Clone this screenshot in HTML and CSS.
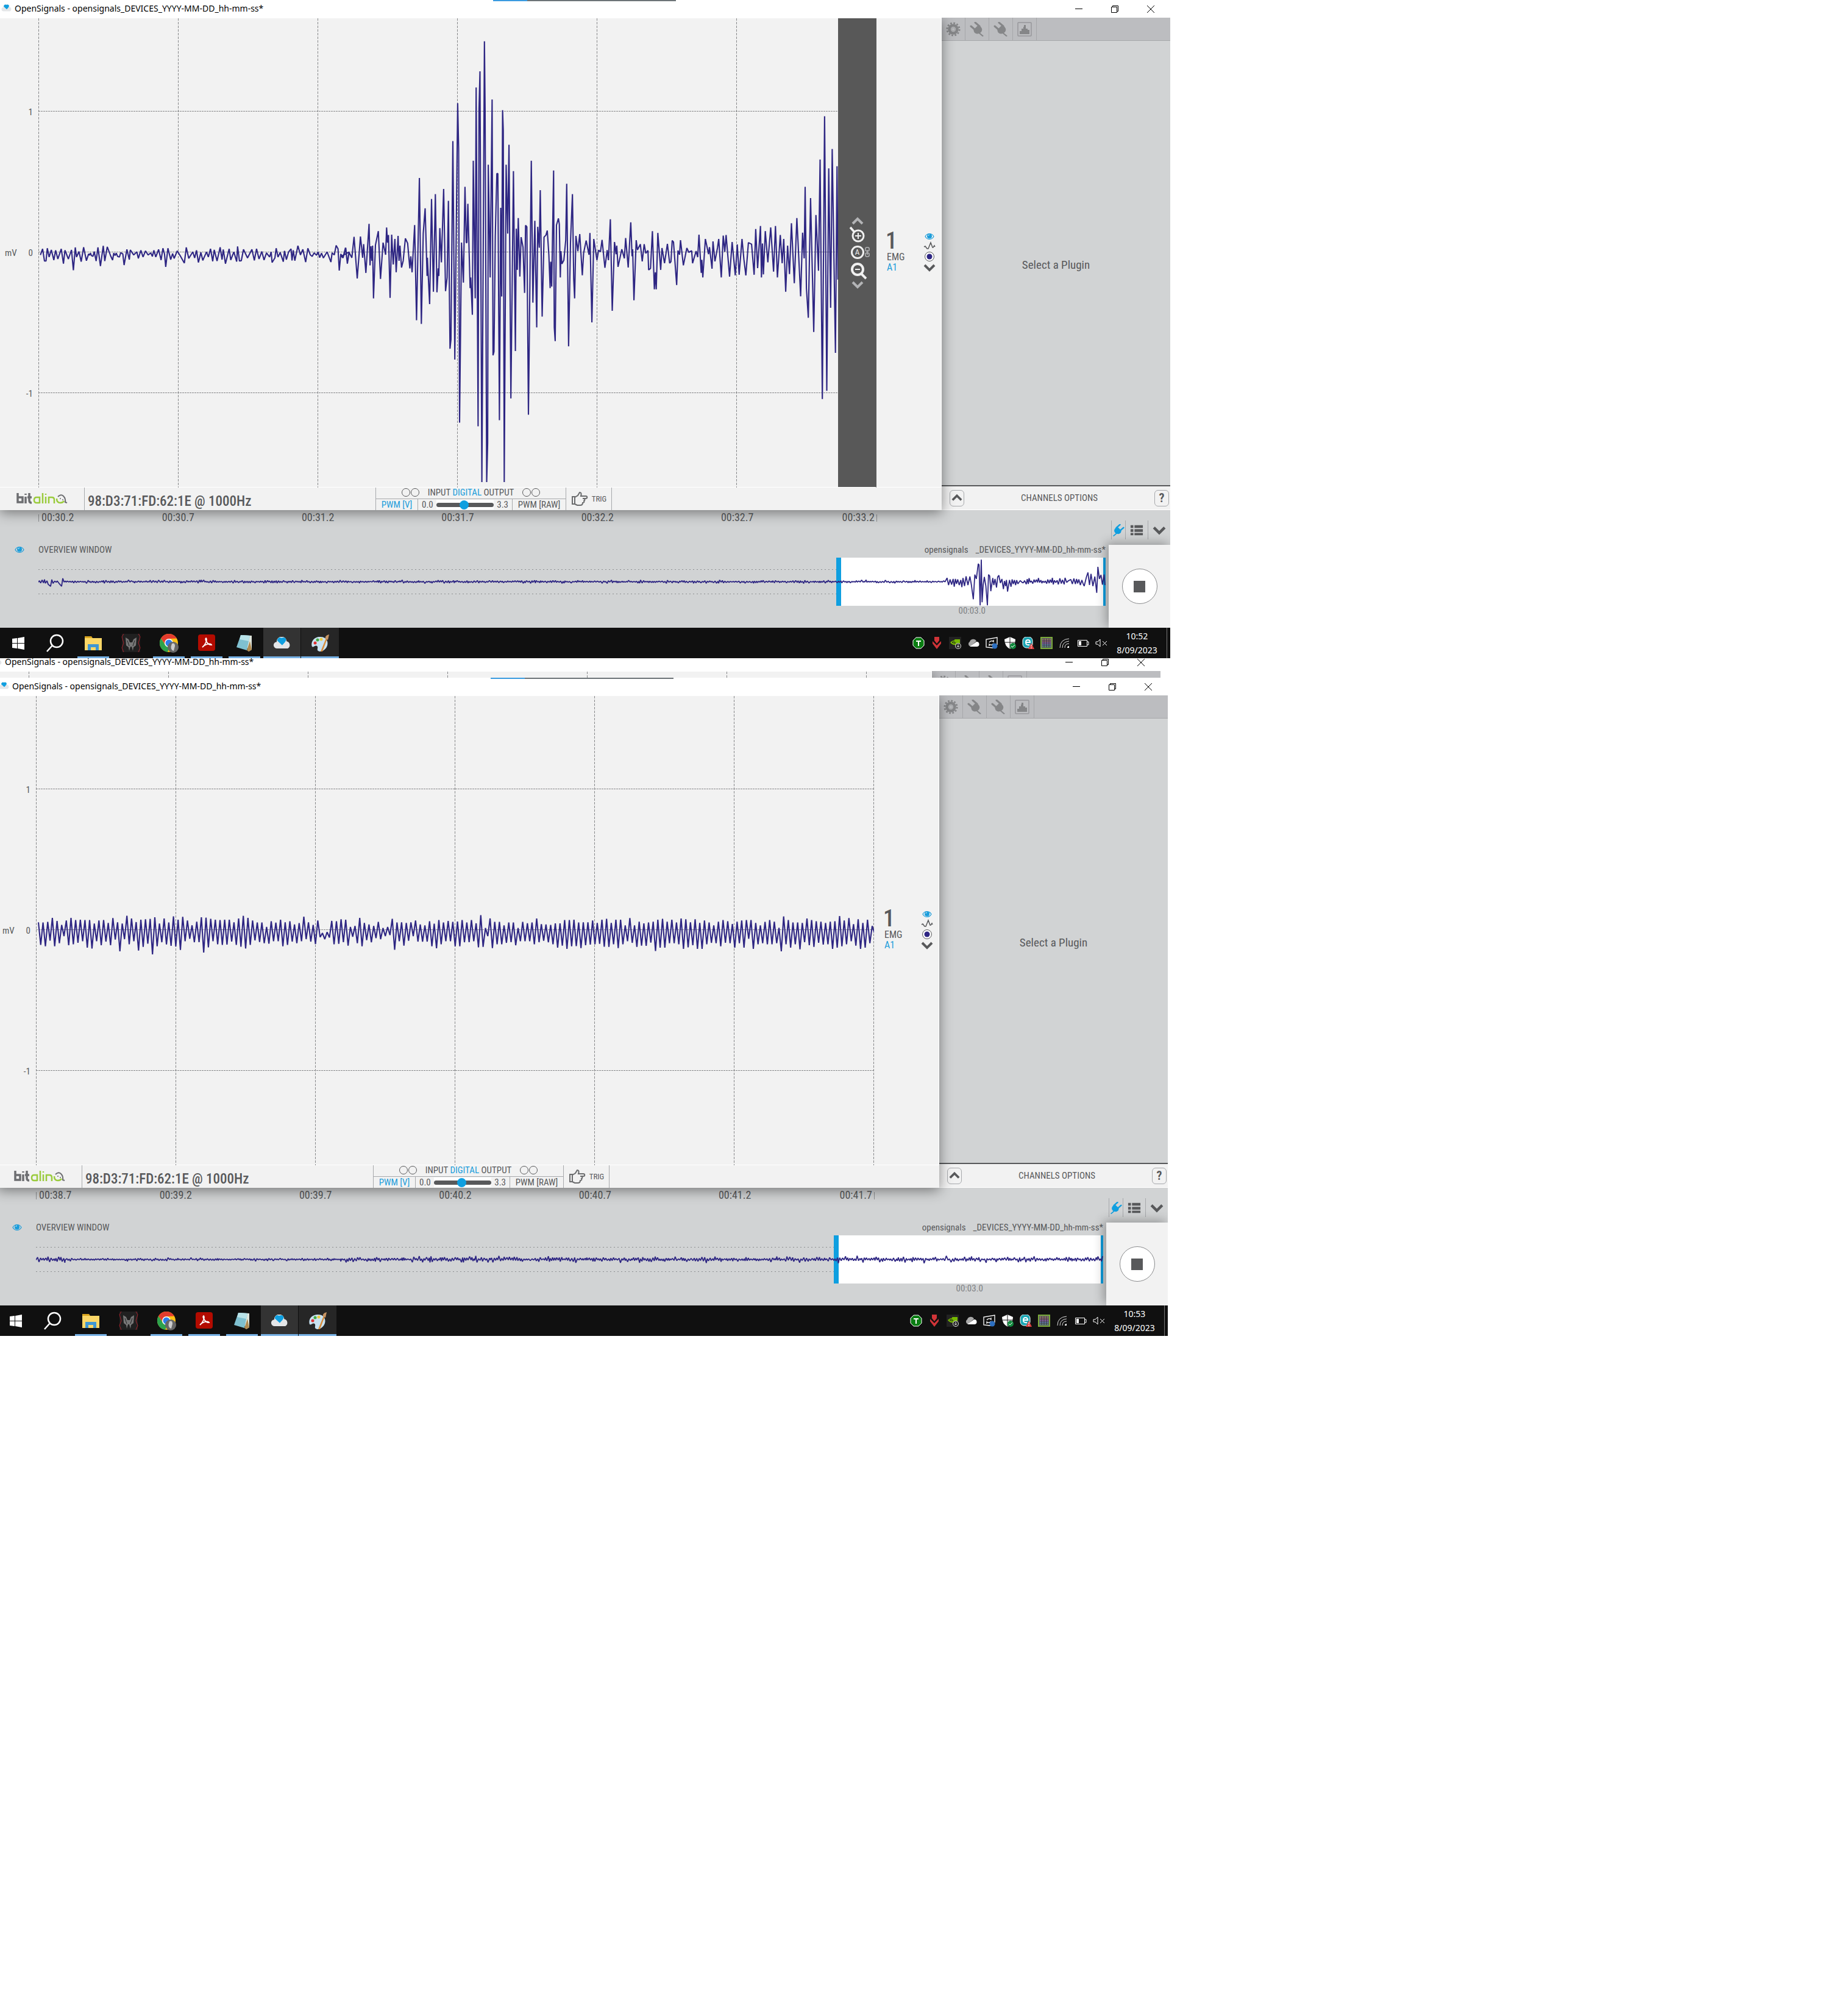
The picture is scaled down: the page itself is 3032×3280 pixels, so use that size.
FILE: index.html
```html
<!DOCTYPE html>
<html lang="en">
<head>
<meta charset="utf-8">
<title>OpenSignals</title>
<link rel="stylesheet" href="styles.css">
</head>
<body>
<svg class="defs" aria-hidden="true">
  <symbol id="i-app" viewBox="0 0 32 22"><path d="M7 21a6 6 0 0 1-1-12 9 9 0 0 1 18-1 7 7 0 0 1 2 13z" fill="#e4e6e8"/><path d="M16 15 7 7c0-4 3-6 5-6l3 1c3-2 8-1 8 3 0 3-3 6-7 10z" fill="#0f9fe0"/></symbol>
  <symbol id="i-min" viewBox="0 0 14 14"><path d="M1 6.5h12" stroke="#000" fill="none"/></symbol>
  <symbol id="i-restore" viewBox="0 0 14 14"><path d="M1.500 3.500h9v9h-9zM3.500 3.500v-2h9v9h-2" stroke="#000" fill="none"/></symbol>
  <symbol id="i-close" viewBox="0 0 14 14"><path d="m1 1 12 12M13 1 1 13" stroke="#000" fill="none"/></symbol>
  <symbol id="i-gear" viewBox="0 0 26 26"><circle cx="13" cy="13" r="11" fill="none" stroke="#858688" stroke-width="3" stroke-dasharray="3 2.760"/><circle cx="13" cy="13" r="7" fill="none" stroke="#858688" stroke-width="5"/><circle cx="13" cy="13" r="3" fill="none" stroke="#a9aaac" stroke-width="2"/></symbol>
  <symbol id="i-plug" viewBox="0 0 24 24"><path d="M8 11 14 5c2 1 5 3 6 6s-1 6-3 7l6 5-2 1-6-5c-3 1-7 0-8-3s-1-4 1-5z"/><path d="m2 7 7 6M9 1l7 6" stroke="currentColor" stroke-width="3" stroke-linecap="round"/></symbol>
  <symbol id="i-chart" viewBox="0 0 24 24"><rect x="1" y="1" width="22" height="22" rx="1" fill="none" stroke="#96979a" stroke-width="1.500"/><path d="M4 20v-5h3v-4h3V8h1V5h3v6h3v2h3v7z" fill="#858688"/></symbol>
  <symbol id="i-eye" viewBox="0 0 16 12"><path d="M1 6c3-6 11-6 14 0-3 6-11 6-14 0z" fill="none" stroke="#1b9ddb" stroke-width="1.200"/><circle cx="8" cy="5.500" r="4" fill="#1b9ddb"/><path d="M6 5c0-1 1-2 2-2" stroke="#fff" fill="none"/></symbol>
  <symbol id="i-wave" viewBox="0 0 20 14"><path d="m1 9 2-1 3 4h2l4-10 3 8h1l2-3 1 2" fill="none" stroke="#58595b" stroke-width="1.500"/></symbol>
  <symbol id="i-dot" viewBox="0 0 18 18"><circle cx="9" cy="9" r="7.500" fill="#fff" stroke="#58595b"/><circle cx="9" cy="9" r="4.500" fill="#2e2683"/></symbol>
  <symbol id="i-down" viewBox="0 0 20 14"><path d="m2 3 8 8 8-8" fill="none" stroke="currentColor" stroke-width="4"/></symbol>
  <symbol id="i-up" viewBox="0 0 20 14"><path d="m2 11 8-8 8 8" fill="none" stroke="currentColor" stroke-width="4"/></symbol>
  <symbol id="i-zoomin" viewBox="0 0 30 30"><g fill="none" stroke="#f0f0f0"><circle cx="16" cy="17" r="9" stroke-width="3"/><path d="m3 3 7 8" stroke-width="3.500"/><path d="M11 17h10M16 12v10" stroke-width="2"/></g></symbol>
  <symbol id="i-zoomout" viewBox="0 0 30 30"><g fill="none" stroke="#f0f0f0"><circle cx="15" cy="12" r="9" stroke-width="4"/><path d="m20 18 9 9" stroke-width="4"/><path d="M11 12h8" stroke-width="2"/></g></symbol>
  <symbol id="i-link" viewBox="0 0 10 18"><g fill="none" stroke="#b3b4b6" stroke-width="1.500"><rect x="2" y="1" width="6" height="6" rx="2"/><rect x="2" y="10" width="6" height="6" rx="2"/><path d="M5 5v8"/></g></symbol>
  <symbol id="i-hand" viewBox="0 0 28 24"><path d="M2 8h4v12H2zM6 9l5-3 3-5c3 0 3 3 2 6h8c3 0 3 4 0 4h-5 2c2 1 2 3 0 4 1 2 0 3-2 3 0 3-1 4-4 4H10l-4-2" fill="none" stroke="#6b6c6e" stroke-width="2"/></symbol>
  <symbol id="i-logo" viewBox="0 0 84 20"><g fill="none" stroke-width="3.500"><path d="M2 1v15h8V8H2M15 7v11M15 2v2M21 1v12q0 4 4 4M18 8h7" stroke="#6d6e71"/><path d="M38 17h-5q-4 0-4-4.500T33 8h5v10M43 1v17M48 7v11M48 2v2M53 18V8h5q4 0 4 4v6M66 10q0 7 6 7 4 0 6-3" stroke="#9acb3c" stroke-width="2.500"/><path d="M68 7q5-5 9-1t3 10l3 1" stroke="#6d6e71" stroke-width="2"/></g><circle cx="72" cy="10" r="1" fill="#6d6e71"/><circle cx="76" cy="12" r="1" fill="#6d6e71"/></symbol>
  <symbol id="i-list" viewBox="0 0 24 20"><path d="M1 1h5v5H1zM8 1h15v5H8zM1 8h5v5H1zM8 8h15v5H8zM1 15h5v4H1zM8 15h15v4H8z" fill="#58595b"/></symbol>
  <symbol id="t-win" viewBox="0 0 32 32"><path d="m6 9 8-1v8H6zM15 8l11-2v10H15zM6 17h8v8l-8-1zM15 17h11v10l-11-2z" fill="#fff"/></symbol>
  <symbol id="t-search" viewBox="0 0 32 32"><circle cx="19" cy="13" r="10" fill="none" stroke="#fff" stroke-width="2.500"/><path d="m12 20-9 10" stroke="#fff" stroke-width="2.500"/></symbol>
  <symbol id="t-folder" viewBox="0 0 32 32"><path d="M2 5h11l2 3H2z" fill="#d9a520"/><path d="M2 8h28v20H2z" fill="#fbd767"/><path d="M7 28V18h18v10h-5v-5h-8v5z" fill="#3f97d3"/></symbol>
  <symbol id="t-pred" viewBox="0 0 32 32"><path d="M1 1h30v30H1z" fill="#202020"/><path d="m4 1-3 5 3 10-3 8 3 7M28 1l3 5-3 10 3 8-3 7" fill="none" stroke="#a3222b"/><path d="m7 7 5 3 2 5h4l2-5 5-3-1 13-4 3-1 6-2-7h-2l-2 7-1-6-4-3z" fill="#777"/><path d="m10 12 3 9M22 12l-3 9" stroke="#222"/></symbol>
  <symbol id="t-chrome" viewBox="0 0 32 32"><circle cx="16" cy="16" r="15" fill="#fbc116"/><path d="M3 8.500A15 15 0 0 1 29 8.500L16 9l-6 9z" fill="#e33b2e"/><path d="M3 8.500 10 19l7 4-3 8A15 15 0 0 1 3 8.500z" fill="#2da24c"/><circle cx="16" cy="16" r="7" fill="#fff"/><circle cx="16" cy="16" r="5.500" fill="#2f7de9"/><circle cx="23" cy="23" r="9" fill="#666"/><path d="M21 17q5-2 5 4l-2 8q-7-2-3-12z" fill="#ccc"/></symbol>
  <symbol id="t-pdf" viewBox="0 0 32 32"><rect x="2" y="2" width="28" height="27" rx="4" fill="#b30b00"/><path d="M9 23c4-3 9-12 6-15-3 1 3 12 9 11-2-4-12 0-15 4z" fill="none" stroke="#fff" stroke-width="1.800"/></symbol>
  <symbol id="t-note" viewBox="0 0 32 32"><path d="m10 3 18 1v23l-5 3z" fill="#dfe5dc"/><path d="m10 3 15 1-5 24-17-5z" fill="#7fc0d0"/><path d="m10 3 15 1-2 9-15-3z" fill="#b8e2e8"/><path d="m20 28 3 2 5-3-3-14z" fill="#b08a50"/></symbol>
  <symbol id="t-paint" viewBox="0 0 32 32"><path d="M3 22C0 13 8 5 17 6c9 0 13 7 11 14s-10 12-15 9c-3-2 1-6-2-8s-6 3-8 1z" fill="#c9e3f2"/><circle cx="8" cy="16" r="2.500" fill="#d33"/><circle cx="12" cy="11" r="2.500" fill="#4a4"/><circle cx="18" cy="10" r="2.500" fill="#ec4"/><path d="m17 30 9-22 2 1-8 21z" fill="#d98d3c"/><path d="M25 9c-1-4 2-6 6-7l-2 9z" fill="#c79463"/></symbol>
  <symbol id="y-t" viewBox="0 0 20 20"><path d="M6 1h8l5 5v8l-5 5H6l-5-5V6z" fill="#0a7d12" stroke="#fff"/><path d="M6 6h8v2h-3v7H9V8H6z" fill="#fff"/></symbol>
  <symbol id="y-v" viewBox="0 0 20 20"><path d="M6 0h8v6l-4 5-4-5zM3 7l7 7 7-7v4l-7 9-7-9z" fill="#d13438"/></symbol>
  <symbol id="y-nv" viewBox="0 0 20 20"><path d="M0 0h20v20H0z" fill="#222"/><path d="M2 9q5-5 10-3v7q-7 1-10-4zM9 4h9v11h-6z" fill="#76b900"/><path d="M5 9q3-3 5 0t-5 0" fill="none" stroke="#222"/><circle cx="15" cy="15" r="4.500" fill="#222" stroke="#ddd"/><path d="M15 12v5m-2-2 2 2 2-2" stroke="#ddd" fill="none"/></symbol>
  <symbol id="y-cloud" viewBox="0 0 20 20"><path d="M4 15a4 4 0 0 1 0-7 6 6 0 0 1 11-1l-9 8z" fill="#aaa"/><path d="M4 16 15 8a4 4 0 0 1 1 8z" fill="#fff"/></symbol>
  <symbol id="y-sync" viewBox="0 0 20 20"><path d="M12 18 1 17V4l18-3v12" fill="none" stroke="#fff" stroke-width="1.300"/><path d="M6 9q3-4 7-1V5M13 11q-3 4-7 1v3" fill="none" stroke="#fff" stroke-width="1.300"/><circle cx="15" cy="15" r="4.500" fill="#2d6fc0"/></symbol>
  <symbol id="y-shield" viewBox="0 0 20 20"><path d="m10 0 9 4q0 11-9 16Q1 15 1 4z" fill="#fff"/><path d="M10 0v20M1 9h18" stroke="#111"/><circle cx="15" cy="15" r="5" fill="#10893e"/><path d="m12 15 2 2 4-4" fill="none" stroke="#fff"/></symbol>
  <symbol id="y-e" viewBox="0 0 20 20"><rect x="1" y="0" width="16" height="18" rx="6" fill="#1aa6b4" stroke="#fff"/><path d="M6 9h7q0-4-3.500-4T6 9q0 5 6 4" fill="none" stroke="#fff" stroke-width="2"/><path d="m15 10 5 10H10z" fill="#e04040"/><path d="M15 13v3M15 17v2" stroke="#fff"/></symbol>
  <symbol id="y-grid" viewBox="0 0 20 20"><path d="M1 1h18v18H1z" fill="#556" stroke="#7cab3a" stroke-width="2"/><path d="M3 4h14" stroke="#d9a05c"/><path d="M3 7h14" stroke="#c66"/><path d="M3 10h14" stroke="#b6c"/><path d="M3 13h14" stroke="#69c"/><path d="M3 16h14" stroke="#6b8"/><path d="M6 3v14M10 3v14M14 3v14" stroke="#334"/></symbol>
  <symbol id="y-wifi" viewBox="0 0 20 20"><path d="M2 18Q2 4 17 3M6 18Q6 8 17 7M10 18q0-7 7-7" fill="none" stroke="#ddd"/><path d="M14 18q0-3 3-3v3z" fill="#fff"/></symbol>
  <symbol id="y-bat" viewBox="0 0 20 20"><path d="M1.500 5.500h15v10h-15zM17 8h2v5h-2" fill="none" stroke="#fff"/><path d="M3 7h4v7H3z" fill="#fff"/></symbol>
  <symbol id="y-mute" viewBox="0 0 20 20"><path d="M1 8h3l4-4v12l-4-4H1zM12 7l7 7M19 7l-7 7" fill="none" stroke="#fff"/></symbol>
</svg>

<main class="stage">

<section class="window">
  <header class="titlebar">
    <span class="strip"></span>
    <svg class="app"><use href="#i-app"/></svg><h1>OpenSignals - opensignals_DEVICES_YYYY-MM-DD_hh-mm-ss*</h1>
    <div class="winctl"><button aria-label="Minimize"><svg><use href="#i-min"/></svg></button><button aria-label="Restore"><svg><use href="#i-restore"/></svg></button><button aria-label="Close"><svg><use href="#i-close"/></svg></button></div>
  </header>
  <div class="upper">
    <div class="signal">
      <div class="plot">
        <div class="yaxis"><b>1</b><b><i>mV</i>0</b><b>-1</b></div>
        <div class="graph">
          <svg class="trace" data-wave="burst" viewBox="0 0 1375 770" preserveAspectRatio="none"></svg>
          <div class="zoombar">
            <button aria-label="Pan up"><svg class="chev"><use href="#i-up"/></svg></button>
            <button aria-label="Zoom in"><svg class="lens"><use href="#i-zoomin"/></svg></button>
            <button class="auto" aria-label="Auto scale">A</button>
            <button class="chain" aria-label="Link axes"><svg><use href="#i-link"/></svg></button>
            <button aria-label="Zoom out"><svg class="lens"><use href="#i-zoomout"/></svg></button>
            <button aria-label="Pan down"><svg class="chev"><use href="#i-down"/></svg></button>
          </div>
        </div>
        <div class="channel">
          <div class="chname"><strong>1</strong><span>EMG</span><a href="#a1">A1</a></div>
          <div class="chtools"><button aria-label="Show channel"><svg class="eye"><use href="#i-eye"/></svg></button><button aria-label="Filter"><svg class="wv"><use href="#i-wave"/></svg></button><button aria-label="Colour"><svg class="dot"><use href="#i-dot"/></svg></button><button aria-label="More"><svg class="dn"><use href="#i-down"/></svg></button></div>
        </div>
      </div>
      <div class="status">
        <div class="brand"><svg role="img" aria-label="bitalino"><use href="#i-logo"/></svg></div>
        <div class="device">98:D3:71:FD:62:1E @ 1000Hz</div>
        <div class="io">
          <div class="digital"><span class="leds"><i></i><i></i></span><span>INPUT <em>DIGITAL</em> OUTPUT</span><span class="leds"><i></i><i></i></span></div>
          <div class="pwm"><button class="on">PWM [V]</button><label class="range"><span>0.0</span><input type="range" min="0" max="3.3" step="0.01" value="1.6" aria-label="PWM voltage"><span>3.3</span></label><button>PWM [RAW]</button></div>
        </div>
        <button class="trig"><svg><use href="#i-hand"/></svg>TRIG</button>
      </div>
    </div>
    <aside class="plugins">
      <nav class="tools"><button aria-label="Settings"><svg><use href="#i-gear"/></svg></button><button aria-label="Plugin one"><svg><use href="#i-plug"/></svg></button><button aria-label="Plugin two"><svg><use href="#i-plug"/></svg></button><button aria-label="Statistics"><svg><use href="#i-chart"/></svg></button></nav>
      <p class="pick">Select a Plugin</p>
      <div class="options"><button aria-label="Expand"><svg><use href="#i-up"/></svg></button><span>CHANNELS OPTIONS</span><button>?</button></div>
    </aside>
  </div>
  <div class="lower">
    <div class="timeline">
      <ol class="times"><li>00:30.2</li><li>00:30.7</li><li>00:31.2</li><li>00:31.7</li><li>00:32.2</li><li>00:32.7</li><li>00:33.2</li></ol>
      <div class="ovhead"><svg class="eye"><use href="#i-eye"/></svg><h2>OVERVIEW WINDOW</h2><p><span>opensignals</span><span>_DEVICES_YYYY-MM-DD_hh-mm-ss*</span></p></div>
      <div class="overview"><span class="brush"></span><svg data-wave="overview-burst" viewBox="0 0 1751 79" preserveAspectRatio="none"></svg></div>
      <div class="span">00:03.0</div>
    </div>
    <div class="side">
      <div class="sidetools"><button aria-label="Devices" class="blue"><svg><use href="#i-plug"/></svg></button><button aria-label="List"><svg><use href="#i-list"/></svg></button><button aria-label="Collapse"><svg><use href="#i-down"/></svg></button></div>
      <div class="player"><button aria-label="Stop recording"></button></div>
    </div>
  </div>
  <footer class="taskbar">
    <button class="start" aria-label="Start"><svg><use href="#t-win"/></svg></button><button aria-label="Search"><svg><use href="#t-search"/></svg></button><button class="run" aria-label="File Explorer"><svg><use href="#t-folder"/></svg></button><button aria-label="PredatorSense"><svg><use href="#t-pred"/></svg></button><button class="run" aria-label="Chrome"><svg><use href="#t-chrome"/></svg></button><button class="run" aria-label="Acrobat"><svg><use href="#t-pdf"/></svg></button><button class="run" aria-label="Notepad"><svg><use href="#t-note"/></svg></button><button class="active" aria-label="OpenSignals"><svg class="small"><use href="#i-app"/></svg></button><button class="open" aria-label="Paint"><svg><use href="#t-paint"/></svg></button>
    <div class="tray"><svg><use href="#y-t"/></svg><svg><use href="#y-v"/></svg><svg><use href="#y-nv"/></svg><svg><use href="#y-cloud"/></svg><svg><use href="#y-sync"/></svg><svg><use href="#y-shield"/></svg><svg><use href="#y-e"/></svg><svg><use href="#y-grid"/></svg><svg><use href="#y-wifi"/></svg><svg><use href="#y-bat"/></svg><svg><use href="#y-mute"/></svg></div>
    <div class="clock"><span>10:52</span><span>8/09/2023</span></div>
  </footer>
</section>

<section class="window peek">
 <div class="peekin">
  <header class="titlebar">
    <svg class="app"><use href="#i-app"/></svg><h1>OpenSignals - opensignals_DEVICES_YYYY-MM-DD_hh-mm-ss*</h1>
    <div class="winctl"><button aria-label="Minimize"><svg><use href="#i-min"/></svg></button><button aria-label="Restore"><svg><use href="#i-restore"/></svg></button><button aria-label="Close"><svg><use href="#i-close"/></svg></button></div>
  </header>
  <div class="upper">
    <div class="signal"><div class="plot"><div class="yaxis"></div><div class="graph"><svg class="trace" data-wave="none" viewBox="0 0 1375 770" preserveAspectRatio="none"></svg></div><div class="channel"></div></div></div>
    <aside class="plugins">
      <nav class="tools"><button aria-label="Settings"><svg><use href="#i-gear"/></svg></button><button aria-label="Plugin one"><svg><use href="#i-plug"/></svg></button><button aria-label="Plugin two"><svg><use href="#i-plug"/></svg></button><button aria-label="Statistics"><svg><use href="#i-chart"/></svg></button></nav>
    </aside>
  </div>
 </div>
</section>

<section class="window second">
 <div class="secondin">
  <header class="titlebar">
    <span class="strip"></span>
    <svg class="app"><use href="#i-app"/></svg><h1>OpenSignals - opensignals_DEVICES_YYYY-MM-DD_hh-mm-ss*</h1>
    <div class="winctl"><button aria-label="Minimize"><svg><use href="#i-min"/></svg></button><button aria-label="Restore"><svg><use href="#i-restore"/></svg></button><button aria-label="Close"><svg><use href="#i-close"/></svg></button></div>
  </header>
  <div class="upper">
    <div class="signal">
      <div class="plot">
        <div class="yaxis"><b>1</b><b><i>mV</i>0</b><b>-1</b></div>
        <div class="graph"><svg class="trace" data-wave="steady" viewBox="0 0 1375 770" preserveAspectRatio="none"></svg></div>
        <div class="channel">
          <div class="chname"><strong>1</strong><span>EMG</span><a href="#a1">A1</a></div>
          <div class="chtools"><button aria-label="Show channel"><svg class="eye"><use href="#i-eye"/></svg></button><button aria-label="Filter"><svg class="wv"><use href="#i-wave"/></svg></button><button aria-label="Colour"><svg class="dot"><use href="#i-dot"/></svg></button><button aria-label="More"><svg class="dn"><use href="#i-down"/></svg></button></div>
        </div>
      </div>
      <div class="status">
        <div class="brand"><svg role="img" aria-label="bitalino"><use href="#i-logo"/></svg></div>
        <div class="device">98:D3:71:FD:62:1E @ 1000Hz</div>
        <div class="io">
          <div class="digital"><span class="leds"><i></i><i></i></span><span>INPUT <em>DIGITAL</em> OUTPUT</span><span class="leds"><i></i><i></i></span></div>
          <div class="pwm"><button class="on">PWM [V]</button><label class="range"><span>0.0</span><input type="range" min="0" max="3.3" step="0.01" value="1.6" aria-label="PWM voltage"><span>3.3</span></label><button>PWM [RAW]</button></div>
        </div>
        <button class="trig"><svg><use href="#i-hand"/></svg>TRIG</button>
      </div>
    </div>
    <aside class="plugins">
      <nav class="tools"><button aria-label="Settings"><svg><use href="#i-gear"/></svg></button><button aria-label="Plugin one"><svg><use href="#i-plug"/></svg></button><button aria-label="Plugin two"><svg><use href="#i-plug"/></svg></button><button aria-label="Statistics"><svg><use href="#i-chart"/></svg></button></nav>
      <p class="pick">Select a Plugin</p>
      <div class="options"><button aria-label="Expand"><svg><use href="#i-up"/></svg></button><span>CHANNELS OPTIONS</span><button>?</button></div>
    </aside>
  </div>
  <div class="lower">
    <div class="timeline">
      <ol class="times"><li>00:38.7</li><li>00:39.2</li><li>00:39.7</li><li>00:40.2</li><li>00:40.7</li><li>00:41.2</li><li>00:41.7</li></ol>
      <div class="ovhead"><svg class="eye"><use href="#i-eye"/></svg><h2>OVERVIEW WINDOW</h2><p><span>opensignals</span><span>_DEVICES_YYYY-MM-DD_hh-mm-ss*</span></p></div>
      <div class="overview"><span class="brush"></span><svg data-wave="overview-steady" viewBox="0 0 1751 79" preserveAspectRatio="none"></svg></div>
      <div class="span">00:03.0</div>
    </div>
    <div class="side">
      <div class="sidetools"><button aria-label="Devices" class="blue"><svg><use href="#i-plug"/></svg></button><button aria-label="List"><svg><use href="#i-list"/></svg></button><button aria-label="Collapse"><svg><use href="#i-down"/></svg></button></div>
      <div class="player"><button aria-label="Stop recording"></button></div>
    </div>
  </div>
  <footer class="taskbar">
    <button class="start" aria-label="Start"><svg><use href="#t-win"/></svg></button><button aria-label="Search"><svg><use href="#t-search"/></svg></button><button class="run" aria-label="File Explorer"><svg><use href="#t-folder"/></svg></button><button aria-label="PredatorSense"><svg><use href="#t-pred"/></svg></button><button class="run" aria-label="Chrome"><svg><use href="#t-chrome"/></svg></button><button class="run" aria-label="Acrobat"><svg><use href="#t-pdf"/></svg></button><button class="run" aria-label="Notepad"><svg><use href="#t-note"/></svg></button><button class="active" aria-label="OpenSignals"><svg class="small"><use href="#i-app"/></svg></button><button class="open" aria-label="Paint"><svg><use href="#t-paint"/></svg></button>
    <div class="tray"><svg><use href="#y-t"/></svg><svg><use href="#y-v"/></svg><svg><use href="#y-nv"/></svg><svg><use href="#y-cloud"/></svg><svg><use href="#y-sync"/></svg><svg><use href="#y-shield"/></svg><svg><use href="#y-e"/></svg><svg><use href="#y-grid"/></svg><svg><use href="#y-wifi"/></svg><svg><use href="#y-bat"/></svg><svg><use href="#y-mute"/></svg></div>
    <div class="clock"><span>10:53</span><span>8/09/2023</span></div>
  </footer>
 </div>
</section>

</main>
<script src="waves.js"></script>
</body>
</html>
```
FILE: styles.css
```css
* { box-sizing: border-box; }
body { margin: 0; background: #fff; color: #58595b; font: 16px/20px "Liberation Sans Narrow", "Roboto Condensed", "Open Sans Condensed", Roboto, sans-serif; }
.defs { position: absolute; width: 0; height: 0; }
button { margin: 0; padding: 0; border: 0; background: none; font: inherit; color: inherit; display: flex; align-items: center; justify-content: center; flex: none; }
a { color: #1b9ddb; text-decoration: none; }
svg { display: block; flex: none; fill: currentColor; }
h1, h2, p, ol { margin: 0; padding: 0; font-weight: 400; }
i, em { font-style: normal; }
.stage { max-width: 1920px; }
.peek { height: 32px; overflow: hidden; }
.peekin { margin: -8px 16px 0 -16px; }
.second { overflow: hidden; }
.secondin { margin: 0 4px 0 -4px; }

.titlebar { position: relative; z-index: 2; display: flex; align-items: center; height: 29px; background: #fff; }
.strip { position: absolute; left: 809px; top: 0; width: 300px; height: 2px; background: linear-gradient(90deg, #3a9be0 56px, #6d7478 56px); }
.app { width: 18px; height: 12px; margin: 0 4px 3px 2px; }
h1 { color: #000; font: 14px/27px "Noto Sans", sans-serif; padding-bottom: 2px; }
.winctl { display: flex; margin-left: auto; gap: 13px; padding-right: 9px; }
.winctl button { width: 46px; height: 28px; }
.winctl svg { width: 14px; height: 14px; }

.upper { display: flex; }
.signal { position: relative; z-index: 1; flex: 1; min-width: 0; background: #f2f2f2; box-shadow: 0 4px 20px rgba(0, 0, 0, .45); }
.plot { display: flex; height: 770px; background: #f2f2f2; border-top: 1px solid #fff; border-right: 1px solid #fff; }
.yaxis { width: 63px; padding-top: 38px; flex: none; }
.yaxis b { display: flex; align-items: center; justify-content: flex-end; height: 231px; padding-right: 9px; font-weight: 400; font-size: 15px; }
.yaxis i { margin-right: auto; padding-left: 8px; }
.graph { position: relative; flex: 1; min-width: 0; }
.trace { width: 100%; height: 770px; overflow: hidden; }
.zoombar { position: absolute; right: 0; top: 0; width: 63px; height: 769px; background: #585858; color: #b3b4b6; display: flex; flex-direction: column; align-items: center; justify-content: center; }
.chev { width: 20px; height: 14px; }
.lens { width: 30px; height: 30px; }
.auto { width: 22px; height: 22px; margin: 3px 0 5px; border: 3px solid #f0f0f0; border-radius: 50%; color: #f0f0f0; font-size: 13px; line-height: 16px; }
.chain { position: absolute; right: 10px; top: 375px; }
.chain svg { width: 10px; height: 18px; }
.channel { display: flex; justify-content: space-between; align-items: center; width: 106px; flex: none; padding: 0 9px 6px 17px; }
.chname { display: flex; flex-direction: column; line-height: 17px; }
.chname strong { font-size: 38px; line-height: 36px; font-weight: 500; margin-left: -2px; }
.chtools { display: flex; flex-direction: column; align-items: center; gap: 2px; padding-top: 4px; }
.eye { width: 16px; height: 12px; }
.wv { width: 20px; height: 14px; }
.dot { width: 18px; height: 18px; }
.dn { width: 20px; height: 14px; }

.status { display: flex; height: 38px; border-top: 1px solid #fff; background: #f2f2f2; }
.brand { width: 139px; padding: 8px 0 0 27px; border-right: 1px solid #a7a9ac; }
.brand svg { width: 84px; height: 20px; }
.device { width: 477px; padding: 5px 0 0 5px; font-size: 23px; line-height: 36px; font-weight: 500; }
.io { width: 313px; border: solid #a7a9ac; border-width: 0 1px; }
.digital { display: flex; align-items: center; justify-content: center; gap: 14px; height: 19px; border-bottom: 1px solid #a7a9ac; font-size: 15px; padding-bottom: 2px; }
.digital em, .on { color: #1b9ddb; }
.leds { display: flex; gap: 1px; }
.leds i { width: 14px; height: 14px; border: 1px solid #58595b; border-radius: 50%; }
.pwm { display: flex; height: 18px; font-size: 15px; }
.pwm button { width: 87px; }
.pwm .on { width: 68px; }
.range { flex: 1; display: flex; align-items: center; justify-content: space-between; padding: 0 6px; border: solid #a7a9ac; border-width: 0 1px; }
.range input { appearance: none; width: 94px; height: 16px; margin: 0; background: #fff; }
.range input::-webkit-slider-runnable-track { height: 7px; border-radius: 4px; background: #58595b; }
.range input::-webkit-slider-thumb { appearance: none; width: 15px; height: 15px; margin-top: -4px; border-radius: 50%; background: #0f9fe0; }
.trig { width: 75px; gap: 6px; font-size: 13px; border-right: 1px solid #a7a9ac; }
.trig svg { width: 28px; height: 24px; }

.plugins { width: 375px; flex: none; display: flex; flex-direction: column; background: #d1d3d4; }
.tools { display: flex; height: 38px; background: #bcbdc0; border-bottom: 1px solid #a6a7aa; }
.tools button { width: 39px; border-right: 1px solid #a6a7aa; color: #858688; }
.tools svg { width: 24px; height: 24px; }
.pick { flex: 1; display: flex; align-items: center; justify-content: center; font-size: 19px; padding-top: 6px; }
.options { display: flex; align-items: center; justify-content: space-between; height: 41px; padding: 0 2px 0 13px; background: #f2f2f2; border-top: 2px solid #58595b; border-bottom: 1px solid #fff; font-size: 15px; }
.options button { width: 24px; height: 27px; border: 1px solid #a7a9ac; border-radius: 6px; font-size: 20px; font-weight: 700; }
.options svg { width: 18px; height: 14px; }

.lower { display: flex; height: 193px; background: #d1d3d4; }
.timeline { flex: 1; min-width: 0; }
.times { display: grid; grid-template-columns: 1fr 2fr 2fr 2fr 2fr 2fr 1fr; height: 50px; margin: 0 380px 0 63px; list-style: none; text-align: center; font-size: 18px; line-height: 24px; }
.times li:first-child { text-align: left; padding-left: 5px; }
.times li:last-child { text-align: right; padding-right: 4px; }
.times li:first-child, .times li:last-child { background: linear-gradient(#8d8f91, #8d8f91) 0 7px / 1px 12px no-repeat; }
.times li:last-child { background-position: right 7px; }
.ovhead { display: flex; align-items: center; height: 28px; padding: 2px 5px 0 24px; font-size: 15px; }
.ovhead h2 { margin-left: 23px; font-size: 15px; }
.ovhead p { display: flex; gap: 12px; margin-left: auto; }
.overview { position: relative; height: 79px; margin: 0 5px 0 63px; }
.overview svg { position: relative; width: 100%; height: 79px; }
.brush { position: absolute; right: 0; top: 0; width: 442px; height: 79px; background: #fff; border: solid #0f9fe0; border-width: 0 4px 0 8px; }
.span { padding-right: 202px; text-align: right; line-height: 17px; font-size: 15px; color: #808285; }
.side { width: 101px; flex: none; display: flex; flex-direction: column; }
.sidetools { display: flex; height: 57px; padding: 17px 0 9px 4px; }
.sidetools button { flex: 1 0 auto; border-left: 1px solid #a7a9ac; padding: 0 6px; }
.sidetools .blue { color: #0f9fe0; padding: 0; }
.sidetools svg { width: 22px; height: 20px; }
.sidetools .blue svg { width: 20px; transform: scaleX(-1); }
.player { flex: 1; display: flex; align-items: center; justify-content: center; background: #f2f2f2; box-shadow: -4px -3px 16px rgba(0, 0, 0, .3); clip-path: inset(-30px 0 0 -30px); }
.player button { width: 58px; height: 58px; border: 1px solid #8a8b8d; border-radius: 50%; background: linear-gradient(#58595b, #58595b) center / 19px 19px no-repeat #fff; }

.taskbar { position: relative; display: flex; height: 50px; background: #101010; color: #fff; }
.taskbar button { width: 62px; }
.taskbar .start, .taskbar .start + button { width: 60px; }
.taskbar .start + button { margin-right: 2px; }
.taskbar button svg { width: 32px; height: 32px; }
.taskbar button .small { width: 30px; height: 20px; }
.taskbar .run { background: linear-gradient(#76b0e4, #76b0e4) center bottom / 52px 3px no-repeat; }
.taskbar .active { background: #333; border-bottom: 3px solid #76b0e4; padding-top: 3px; margin-right: 1px; width: 61px; }
.taskbar .open { background: #262626; border-bottom: 3px solid #76b0e4; padding-top: 3px; }
.tray { display: flex; align-items: center; gap: 10px; margin-left: auto; }
.tray svg { width: 20px; height: 20px; }
.clock { display: flex; flex-direction: column; align-items: center; justify-content: center; width: 98px; margin: 0 5px 0 0; font: 14px/23px "Noto Sans", sans-serif; border-right: 1px solid #777; }
```
FILE: waves.js
```js
// Draws the grids and the EMG traces of the main and overview charts.
const NS = "http://www.w3.org/2000/svg";
let seed = 7;
const rnd = () => (seed = (seed * 16807) % 2147483647) / 2147483647;

const nums = s => s.trim().split(/[\s,]+/).map(Number);
const map = (s, ox, oy, kx, ky) => {
  const n = nums(s), out = [];
  for (let i = 0; i < n.length; i += 2) out.push([ox + n[i] * kx, oy + n[i + 1] * ky]);
  return out;
};
// Baseline noise between two x positions.
const noise = (x0, x1, step, mid, amp) => {
  const out = [];
  let side = 1;
  for (let x = x0; x < x1; x += step * (0.6 + rnd() * 0.8)) {
    out.push([x, mid + side * amp * (0.2 + rnd() * rnd() * 1.4)]);
    side = -side;
  }
  return out;
};
// Alternating peaks and troughs at a fixed period.
const cycle = (x0, period, tops, lows) => {
  const t = nums(tops), l = nums(lows), out = [];
  t.forEach((v, i) => {
    out.push([x0 + i * period, 339 + v / 3]);
    if (l[i]) out.push([x0 + (i + 0.5) * period, 339 + l[i] / 3]);
  });
  return out;
};

const BURST = `0,785 5,790 10,770 13,757 19,808 24,772 33,790 40,721 50,858 60,720 67,790 70,745 77,840 87,678 90,815 93,752 96,800 98,750 101,924 107,748 116,702 123,860 131,740 139,780 142,690 145,740 148,715 153,922 158,714 163,812 168,728 172,838 178,718 181,800 184,750 189,822 194,800 201,726 208,742 215,825 218,785 222,838 230,682 236,996 245,527 251,1008 257,710 263,627 269,850 270,790 277,943 283,596 289,902 295,580 300,904 304,825 306,850 309,692 314,805 321,563 327,900 332,855 336,602 341,1090 344,1060 350,405 356,1126 365,280 368,430 371,1334 377,740 383,872 388,556 392,740 394,740 397,612 404,890 406,855 411,978 414,470 420,924 423,228 429,1346 432,300 435,175 441,1530 449,76 451,300 456,1530 459,1400 461,483 467,855 473,268 476,1112 479,1100 483,720 488,512 491,512 496,1326 500,625 503,918 506,303 508,370 511,1530 517,483 522,710 526,417 532,1254 540,504 546,1098 549,694 552,830 555,659 560,852 564,722 570,755 575,906 578,683 582,688 587,1308 596,470 601,938 607,668 613,1020 616,688 621,757 624,567 630,984 636,722 642,715 646,700 651,780 655,890 657,803 660,885 666,502 668,1020 671,1065 675,682 681,660 684,680 687,855 689,768 692,810 698,798 704,732 707,546 713,1082 719,740 725,580 729,860 732,924 736,718 742,768 748,712 756,848 760,775 768,733 777,780 780,708 786,1003 792,728 802,798 807,765 813,770 818,731 827,823 834,765 838,798 844,663 850,965 857,738 862,778 864,750 868,820 880,762 888,792 892,725 900,822 908,673 912,785 914,762 918,930 925,732 929,764 938,745 944,802 950,745 955,775 962,766 964,830 970,825 976,702 982,894 985,838 988,894 993,708 1002,830 1006,758 1014,808 1023,744 1030,808 1034,803 1038,733 1042,738 1052,880 1056,766 1061,780 1064,732 1073,815 1084,758 1090,772 1099,767 1102,808 1113,768 1118,788 1122,714 1129,840 1131,797 1134,855 1142,728 1152,778 1155,755 1163,826 1166,736 1172,802 1180,758 1184,728 1192,855 1198,717 1203,770 1207,715 1218,852 1226,738 1236,848 1242,746 1248,846 1257,728 1263,795 1269,848 1277,740 1287,745 1295,846 1300,695 1306,824 1315,685 1318,855 1321,743 1324,845 1330,702 1338,805 1347,690 1356,836 1362,685 1368,855 1377,715 1383,808 1388,728 1394,902 1400,750 1406,844 1412,676 1421,874 1429,659 1441,917 1447,707 1452,792 1455,556 1459,890 1465,988 1472,593 1482,1035 1489,649 1497,833 1502,466 1509,1256 1516,323 1523,1229 1529,495 1535,955 1540,431 1550,1104 1555,488 1558,862`;

const REST = `130,1255 137,1225 143,1285 148,1285 152,1222 158,1265 165,1230 173,1280 179,1232 186,1275 197,1225 204,1298 209,1232 220,1275 230,1230 236,1330 242,1218 246,1265 254,1238 261,1288 269,1217 278,1283 285,1250 288,1256 291,1246 294,1258 299,1262 303,1238 309,1285 315,1218 323,1310 332,1210 337,1285 345,1215 356,1260 362,1280 366,1246 370,1258 374,1246 378,1262 384,1265 388,1244 395,1250 399,1305 408,1228 416,1278 419,1230 430,1255 440,1240 445,1272 453,1232 460,1265 468,1235 476,1255 485,1245 490,1262 495,1232 501,1265 510,1228 518,1280 524,1222 529,1250 533,1314 540,1222 549,1278 555,1248 560,1272 570,1235 580,1260 593,1295 599,1218 607,1272 620,1240 626,1270 632,1232 638,1292 646,1243 652,1282 664,1240 670,1265 677,1225 684,1286 689,1230 698,1285 708,1217 714,1278 718,1228 725,1298 737,1225 742,1280 752,1240 761,1288 764,1213 770,1285 776,1283 783,1228 796,1270 810,1228 818,1282 825,1225 833,1275 842,1238 849,1280 857,1245 867,1265 872,1240 875,1292 884,1270 888,1222 894,1265 901,1243 911,1288 915,1235 921,1278 928,1240 936,1225 939,1282 943,1232 948,1283 958,1210 966,1255 974,1228 983,1290 990,1222 998,1255 1004,1262 1010,1245 1018,1256 1023,1240 1028,1268 1034,1246 1040,1270 1052,1240 1064,1290 1068,1245 1075,1255 1081,1208 1087,1225 1091,1332 1096,1250 1103,1270 1112,1220 1117,1298 1123,1240`;

const OV_BURST = `945,524 950,505 954,540 958,512 962,538 966,510 969,548 972,510 975,534 978,512 982,540 986,515 989,550 992,505 996,545 1000,497 1005,540 1010,498 1014,540 1019,610 1023,488 1027,510 1032,435 1034,440 1037,640 1040,415 1042,625 1045,540 1048,500 1052,545 1056,640 1059,488 1062,495 1065,570 1070,505 1073,540 1076,510 1080,552 1083,500 1086,492 1090,530 1094,510 1098,560 1101,520 1104,545 1106,515 1109,572 1114,515 1118,548 1121,512 1124,535 1127,515 1130,540 1133,516 1136,534 1142,518 1148,528`;
const OV_TAIL = `1275,512 1279,535 1283,508 1287,535 1290,510 1293,532 1296,512 1300,540 1304,515 1307,532 1310,545 1316,500 1320,478 1324,540 1328,485 1333,545 1338,498 1343,578 1346,450 1350,510 1354,490 1358,538 1362,488 1365,540`;

const waves = {
  none: () => [],
  burst: () => [
    ...map(REST, -63, -30, 0.5102, 0.33333),
    ...map(BURST, 497, 0, 0.523, 0.4974)
  ],
  steady: () => [
    ...cycle(4, 7.64,
      "97,98,95,75,90,110,88,75,86,84,86,86,103,88,86,100,76,97,103,65,78,96,84,82,80,72,103,78,98,68,84,70,88,112,94,72,74,80,84,86,84,84,97,78,65,75,88,98,98,120,92,99,84,97,92,108,101,69,97,110,88,150,145,90,92,82,84,120,115,75,100,108,115,95,125,120,80,98,97,100,97,88,108,112,92,104",
      "208,215,187,215,200,165,210,205,198,190,222,226,190,210,192,210,182,240,180,205,190,236,218,202,255,215,195,206,213,216,233,190,178,195,195,246,220,190,205,208,207,192,208,217,226,208,186,194,200,202,190,190,215,208,192,200,190,180,192,204,170,180,172,205,203,195,212,168,200,215,185,195,175,180,165,160,232,190,212,188,165,192,192,192,215,225"),
    ...cycle(661, 7.645,
      "86,98,90,95,93,86,98,86,102,62,125,78,95,95,112,98,98,125,95,102,98,78,106,108,110,102,102,86,86,84,98,97,97,88,100,84,80,100,84,84,112,76,112,94,102,98,94,84,80,94,84,98,78,82,97,82,100,88,98,112,94,86,92,105,94,88,86,86,100,112,95,86,94,124,68,86,98,98,100,78,86,92,94,100,94,92,66,88,76,106,82,100,84,115",
      "205,190,190,215,215,195,195,190,220,218,165,224,205,205,198,195,210,190,190,190,205,195,188,195,205,222,212,228,215,214,224,210,207,205,203,217,218,205,224,205,190,198,218,212,213,197,238,222,222,200,200,205,228,220,210,228,228,205,198,200,215,198,200,222,200,222,178,228,205,200,205,205,200,240,205,222,205,230,195,210,218,198,207,205,228,222,215,205,190,212,228,222,200,150")
  ],
  "overview-burst": () => [
    ...noise(0, 18, 2, 39.5, 4), [20, 47], [22, 36], ...noise(24, 36, 2, 39.5, 3), [38, 47], [40, 34],
    ...noise(42, 1486, 2, 39.5, 2),
    ...map(OV_BURST, 897, -135, 0.625, 0.33333),
    ...noise(1616, 1692, 2, 39.5, 5),
    ...map(OV_TAIL, 897, -135, 0.625, 0.33333)
  ],
  "overview-steady": () => [
    ...noise(0, 48, 2, 39.5, 4),
    ...noise(48, 500, 2, 39.5, 2),
    ...noise(500, 1751, 2, 39.5, 4)
  ]
};

const add = (svg, tag, attrs) => {
  const el = document.createElementNS(NS, tag);
  for (const k in attrs) el.setAttribute(k, attrs[k]);
  svg.appendChild(el);
};

document.querySelectorAll("svg[data-wave]").forEach(svg => {
  const kind = svg.dataset.wave;
  if (kind.startsWith("overview")) {
    add(svg, "path", { d: "M0 19.500H1309M0 59.500H1309", stroke: "#8d8f91", "stroke-dasharray": "2 4", fill: "none" });
  } else {
    let d = "";
    for (let i = 0; i <= 6; i++) d += `M${Math.min(i * 229 + 0.5, 1374.5)} 0V770`;
    add(svg, "path", { d, stroke: "#88898b", "stroke-dasharray": "4 2", fill: "none" });
    add(svg, "path", { d: "M0 152.500H1375M0 383.500H1375M0 614.500H1375", stroke: "#88898b", "stroke-dasharray": "3 1", fill: "none" });
  }
  add(svg, "polyline", {
    points: waves[kind]().map(p => p[0].toFixed(1) + "," + p[1].toFixed(1)).join(" "),
    fill: "none", stroke: "#2e2683", "stroke-width": kind.startsWith("overview") ? 1.8 : 2.1, "stroke-linejoin": "bevel"
  });
});
```
